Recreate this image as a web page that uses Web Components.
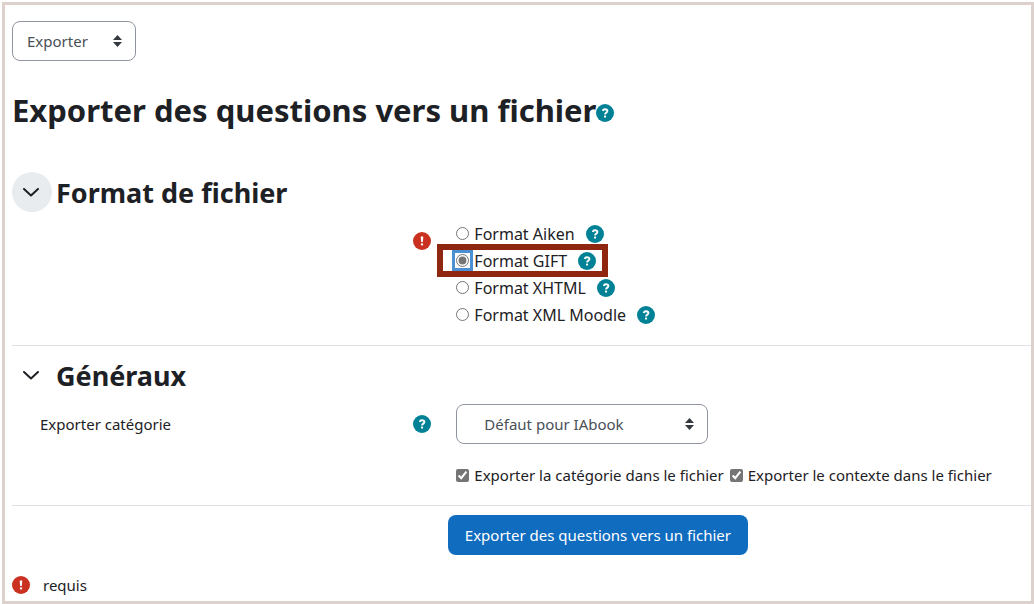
<!DOCTYPE html>
<html lang="fr">
<head>
<meta charset="utf-8">
<meta name="viewport" content="width=device-width, initial-scale=1">
<title>Exporter des questions vers un fichier</title>
<style>
  *{box-sizing:border-box}
  body{margin:0;background:#fff;color:#1d2125;font:15px/24px "Noto Sans","Open Sans",sans-serif}
</style>
</head>
<body>
<export-page></export-page>
<script>
const define = (name, html) => {
  const template = document.createElement('template');
  template.innerHTML = '<style>*{box-sizing:border-box}</style>' + html;
  customElements.define(name, class extends HTMLElement {
    constructor() {
      super();
      this.attachShadow({mode: 'open'}).append(template.content.cloneNode(true));
    }
  });
};

define('help-tip', `
  <style>
    :host{display:inline-flex;flex:none}
    button{display:flex;padding:0;border:0;background:none;border-radius:50%;cursor:pointer}
    svg{display:block}
  </style>
  <button type="button" aria-label="Aide"><svg width="18" height="18" viewBox="0 0 18 18" aria-hidden="true">
    <circle cx="9" cy="9" r="9" fill="#008196"/>
    <path d="M6.7 6.9C7 5.7 7.9 5.2 9 5.2c1.400 0 2.400.7 2.400 1.800 0 1.700-2.300 1.600-2.300 3.400" fill="none" stroke="#fff" stroke-width="1.900"/>
    <rect x="8" y="11.500" width="2.100" height="2.100" rx=".7" fill="#fff"/>
  </svg></button>`);

define('required-mark', `
  <style>:host{display:inline-flex;flex:none} svg{display:block}</style>
  <svg width="18" height="18" viewBox="0 0 18 18" role="img" aria-label="Requis">
    <circle cx="9" cy="9" r="9" fill="#ca3120"/>
    <path d="M7.700 4.500h2.600l-.4 5.400H8.100z" fill="#fff"/>
    <rect x="7.900" y="11.200" width="2.200" height="2.200" rx=".7" fill="#fff"/>
  </svg>`);

define('select-box', `
  <style>
    :host{display:grid;align-items:center;width:fit-content}
    ::slotted(select){grid-area:1/1;width:100%;height:40px;margin:0;padding:0 32px 0 14px;
      appearance:none;border:1px solid #8f959e;border-radius:8px;background:#fff;color:#495057;font:inherit}
    ::slotted(select.inset){padding-left:27px}
    svg{grid-area:1/1;justify-self:end;margin-right:14px;pointer-events:none;z-index:1}
  </style>
  <slot></slot>
  <svg width="9" height="12" viewBox="0 0 9 12" aria-hidden="true"><path d="M4.500 0 9 5H0zM0 7h9l-4.500 5z" fill="#343a40"/></svg>`);

define('choice-row', `
  <style>
    :host{display:flex;align-items:center;gap:11px;position:relative;width:fit-content;height:27px;font-size:16px}
    :host([marked])::after{content:"";position:absolute;inset:-3px -12px -3px -19px;border:6px solid #8f2610;pointer-events:none}
  </style>
  <slot></slot>`);

define('form-row', `
  <style>
    :host{display:grid;grid-template-columns:27fr 37fr;column-gap:25px;align-items:center}
    :host([top]){align-items:start}
    .label{display:flex;justify-content:space-between;align-items:center;padding-left:28px}
    :host([top]) .label{padding-top:12px}
    .mark{margin-left:auto;display:flex}
  </style>
  <div class="label"><slot name="label"></slot><span class="mark"><slot name="mark"></slot></span></div>
  <div><slot></slot></div>`);

define('form-section', `
  <style>
    :host{display:block;border-bottom:1px solid #dee2e6}
    header{display:flex;align-items:center;gap:4px}
    button{display:grid;place-items:center;flex:none;width:40px;height:40px;padding:0 2px 0 0;border:0;border-radius:50%;background:none;cursor:pointer}
    :host([active]) button{background:#e9ecef}
    h3{margin:0;padding-top:2px;font-size:27px;line-height:36px;font-weight:700}
  </style>
  <header>
    <button type="button" aria-expanded="true" aria-label="Replier"><svg width="16" height="9" viewBox="0 0 16 9" aria-hidden="true"><path d="M1 1l7 6.500L15 1" fill="none" stroke="#1d2125" stroke-width="2" stroke-linecap="round" stroke-linejoin="round"/></svg></button>
    <h3><slot name="title"></slot></h3>
  </header>
  <slot></slot>`);

define('export-page', `
  <style>
    :host{display:block;padding:2px 0 0 2px}
    main{border:3px solid #dcd1cd;padding:16px 0 4px 7px;min-height:calc(100vh - 2px)}
    h2{display:flex;align-items:center;margin:26px 0 0;font-size:31px;line-height:46px;font-weight:700}
    h2 help-tip{margin-top:6px}
    .nav{width:124px}
    .format{margin-top:39px;padding-bottom:17px}
    .format form-row{margin-top:8px}
    .general{margin-top:9px;padding-bottom:18px}
    .general form-row{margin-top:9px}
    .general .checks{margin-top:19px}
    label{display:flex;align-items:center;white-space:nowrap}
    input{flex:none;width:13px;height:13px;margin:0 5px 0 0;accent-color:#757575}
    input[type=radio]:checked{outline:3px solid #4a90d2;outline-offset:1px}
    .pair{display:flex;gap:6px}
    .wide{width:252px}
    .actions{display:flex;justify-content:center;margin-top:9px;padding-left:15%}
    .submit{min-width:300px;height:40px;padding:0 14px;border:0;border-radius:8px;background:#0f6cbf;color:#fff;font:inherit;cursor:pointer}
    .legend{display:flex;align-items:center;gap:13px;margin:18px 0 0}
  </style>
  <main>
    <select-box class="nav"><select aria-label="Navigation"><option>Exporter</option></select></select-box>
    <h2>Exporter des questions vers un fichier<help-tip></help-tip></h2>
    <form>
      <form-section class="format" active>
        <span slot="title">Format de fichier</span>
        <form-row top>
          <required-mark slot="mark"></required-mark>
          <choice-row><label><input type="radio" name="format">Format Aiken</label><help-tip></help-tip></choice-row>
          <choice-row marked><label><input type="radio" name="format" checked>Format GIFT</label><help-tip></help-tip></choice-row>
          <choice-row><label><input type="radio" name="format">Format XHTML</label><help-tip></help-tip></choice-row>
          <choice-row><label><input type="radio" name="format">Format XML Moodle</label><help-tip></help-tip></choice-row>
        </form-row>
      </form-section>
      <form-section class="general">
        <span slot="title">Généraux</span>
        <form-row>
          <label slot="label" for="category">Exporter catégorie</label>
          <help-tip slot="mark"></help-tip>
          <select-box class="wide"><select id="category" class="inset"><option>Défaut pour IAbook</option></select></select-box>
        </form-row>
        <form-row class="checks">
          <div class="pair">
            <label><input type="checkbox" checked>Exporter la catégorie dans le fichier</label>
            <label><input type="checkbox" checked>Exporter le contexte dans le fichier</label>
          </div>
        </form-row>
      </form-section>
      <div class="actions"><button class="submit" type="submit">Exporter des questions vers un fichier</button></div>
    </form>
    <p class="legend"><required-mark></required-mark>requis</p>
  </main>`);
</script>
</body>
</html>
